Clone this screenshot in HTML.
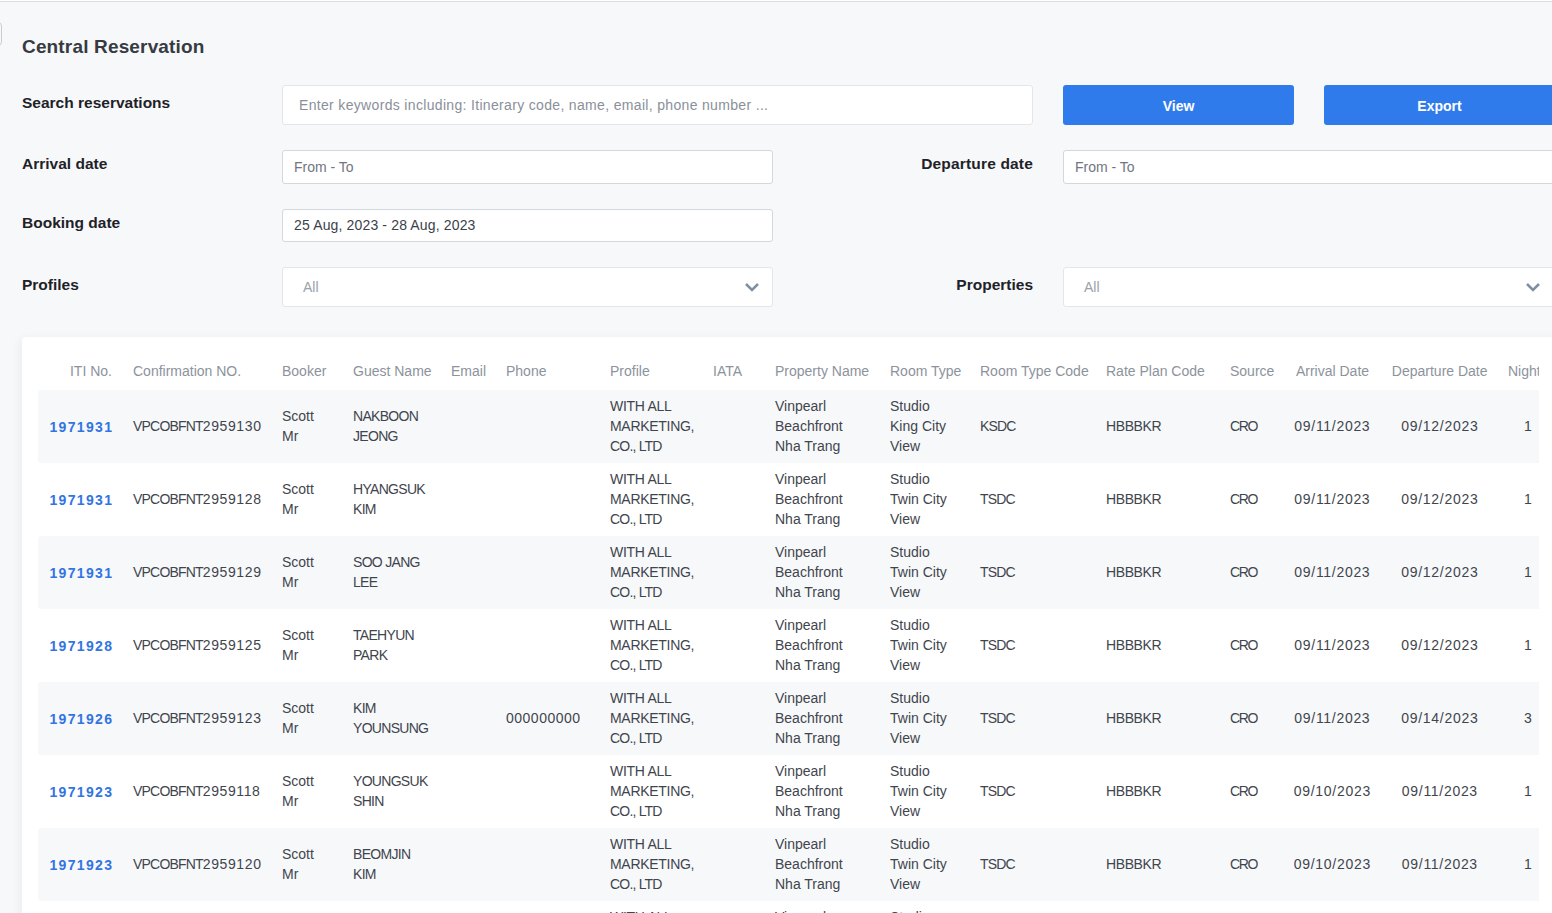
<!DOCTYPE html>
<html><head><meta charset="utf-8">
<style>
html,body{margin:0;padding:0;}
body{width:1552px;height:913px;overflow:hidden;position:relative;background:#f7f8fa;font-family:"Liberation Sans",sans-serif;}
.abs{position:absolute;white-space:nowrap;}
.topline{position:absolute;left:0;top:0;width:1552px;height:1px;background:#fff;border-bottom:1px solid #dcdee1;}
.leftbox{position:absolute;left:-20px;top:22px;width:20px;height:22px;border:1px solid #c9cdd2;border-radius:4px;}
.title{left:22px;top:35px;font-size:19px;letter-spacing:0.16px;font-weight:bold;color:#363b42;line-height:24px;}
.lbl{font-size:15.5px;font-weight:bold;color:#1e2228;line-height:20px;}
.inp{position:absolute;background:#fff;border:1px solid #d3d8de;border-radius:3px;box-sizing:border-box;}
.inp.light{border-color:#e3e6ea;}
.ph{position:absolute;font-size:14px;line-height:18px;white-space:nowrap;}
.btn{position:absolute;background:#2f7bec;border-radius:3px;color:#fff;font-weight:bold;font-size:14px;text-align:center;}
.card{position:absolute;left:22px;top:337px;width:1560px;height:600px;background:#fff;border-radius:4px;box-shadow:-1px 3px 12px rgba(20,30,40,0.065);}
.clip{position:absolute;left:38px;top:337px;width:1501px;height:600px;overflow:hidden;}
.hd{position:absolute;top:22px;font-size:14px;line-height:18px;color:#8c939c;white-space:nowrap;}
.row{position:absolute;left:0;width:1600px;height:73px;}
.row.odd{background:#f7f8fa;border-radius:3px;}
.c{position:absolute;font-size:14px;line-height:20px;color:#3f454d;white-space:nowrap;}
.lnk{color:#3274e2;font-weight:bold;letter-spacing:1.35px;}
</style></head><body>
<div class="topline"></div>
<div class="leftbox"></div>
<div class="abs title">Central Reservation</div>

<div class="abs lbl" style="left:22px;top:92.5px;">Search reservations</div>
<div class="inp light" style="left:282px;top:85px;width:751px;height:40px;"></div>
<div class="ph" style="left:299px;top:96px;color:#8a9099;letter-spacing:0.33px;">Enter keywords including: Itinerary code, name, email, phone number ...</div>
<div class="btn" style="left:1063px;top:85px;width:231px;height:40px;line-height:42px;">View</div>
<div class="btn" style="left:1324px;top:85px;width:231px;height:40px;line-height:42px;">Export</div>

<div class="abs lbl" style="left:22px;top:154px;">Arrival date</div>
<div class="inp" style="left:282px;top:150px;width:491px;height:34px;"></div>
<div class="ph" style="left:294px;top:158px;color:#6f7680;">From - To</div>
<div class="abs lbl" style="right:519px;top:154px;letter-spacing:0.17px;">Departure date</div>
<div class="inp" style="left:1063px;top:150px;width:520px;height:34px;"></div>
<div class="ph" style="left:1075px;top:158px;color:#6f7680;">From - To</div>

<div class="abs lbl" style="left:22px;top:213px;">Booking date</div>
<div class="inp" style="left:282px;top:209px;width:491px;height:33px;"></div>
<div class="ph" style="left:294px;top:216px;color:#3b414a;letter-spacing:0.15px;">25 Aug, 2023 - 28 Aug, 2023</div>

<div class="abs lbl" style="left:22px;top:275px;">Profiles</div>
<div class="inp light" style="left:282px;top:267px;width:491px;height:40px;"></div>
<div class="ph" style="left:303px;top:278px;color:#9aa1a9;">All</div>
<svg class="abs" style="left:744px;top:281px;" width="16" height="12" viewBox="0 0 16 12"><path d="M2 3 L8 9 L14 3" fill="none" stroke="#8190a0" stroke-width="2.5"/></svg>
<div class="abs lbl" style="right:519px;top:275px;">Properties</div>
<div class="inp light" style="left:1063px;top:267px;width:520px;height:40px;"></div>
<div class="ph" style="left:1084px;top:278px;color:#9aa1a9;">All</div>
<svg class="abs" style="left:1525px;top:281px;" width="16" height="12" viewBox="0 0 16 12"><path d="M2 3 L8 9 L14 3" fill="none" stroke="#8190a0" stroke-width="2.5"/></svg>

<div class="card"></div>
<div class="clip" id="tbl">
<div class="hd" style="right:1427px;top:25px;">ITI No.</div>
<div class="hd" style="left:95px;top:25px;">Confirmation NO.</div>
<div class="hd" style="left:244px;top:25px;">Booker</div>
<div class="hd" style="left:315px;top:25px;">Guest Name</div>
<div class="hd" style="left:413px;top:25px;">Email</div>
<div class="hd" style="left:468px;top:25px;">Phone</div>
<div class="hd" style="left:572px;top:25px;">Profile</div>
<div class="hd" style="left:675px;top:25px;">IATA</div>
<div class="hd" style="left:737px;top:25px;">Property Name</div>
<div class="hd" style="left:852px;top:25px;">Room Type</div>
<div class="hd" style="left:942px;top:25px;">Room Type Code</div>
<div class="hd" style="left:1068px;top:25px;">Rate Plan Code</div>
<div class="hd" style="left:1192px;top:25px;">Source</div>
<div class="hd" style="left:1194.5px;width:200px;text-align:center;top:25px;">Arrival Date</div>
<div class="hd" style="left:1301.7px;width:200px;text-align:center;top:25px;">Departure Date</div>
<div class="hd" style="left:1470px;top:25px;">Nights</div>
<div class="row odd" style="top:53px;"><div class="c lnk" style="right:1524.65px;top:27px;">1971931</div><div class="c" style="left:95px;top:26px;"><span style="letter-spacing:-0.8px">VPCOBFNT</span><span style="letter-spacing:0.6px">2959130</span></div><div class="c" style="left:244px;top:16px;">Scott<br>Mr</div><div class="c" style="left:315px;top:16px;letter-spacing:-0.7px;">NAKBOON<br>JEONG</div><div class="c" style="left:572px;top:6px;"><span style="letter-spacing:-0.3px">WITH ALL<br>MARKETING,</span><br><span style="letter-spacing:-0.8px">CO., LTD</span></div><div class="c" style="left:737px;top:6px;">Vinpearl<br>Beachfront<br>Nha Trang</div><div class="c" style="left:852px;top:6px;">Studio<br>King City<br>View</div><div class="c" style="left:942px;top:26px;letter-spacing:-0.85px;">KSDC</div><div class="c" style="left:1068px;top:26px;letter-spacing:-0.4px;">HBBBKR</div><div class="c" style="left:1192px;top:26px;letter-spacing:-1.3px;">CRO</div><div class="c" style="left:1194.35px;width:200px;text-align:center;top:26px;letter-spacing:0.7px;">09/11/2023</div><div class="c" style="left:1301.85px;width:200px;text-align:center;top:26px;letter-spacing:0.7px;">09/12/2023</div><div class="c" style="left:1390px;width:200px;text-align:center;top:26px;">1</div></div>
<div class="row" style="top:126px;"><div class="c lnk" style="right:1524.65px;top:27px;">1971931</div><div class="c" style="left:95px;top:26px;"><span style="letter-spacing:-0.8px">VPCOBFNT</span><span style="letter-spacing:0.6px">2959128</span></div><div class="c" style="left:244px;top:16px;">Scott<br>Mr</div><div class="c" style="left:315px;top:16px;letter-spacing:-0.7px;">HYANGSUK<br>KIM</div><div class="c" style="left:572px;top:6px;"><span style="letter-spacing:-0.3px">WITH ALL<br>MARKETING,</span><br><span style="letter-spacing:-0.8px">CO., LTD</span></div><div class="c" style="left:737px;top:6px;">Vinpearl<br>Beachfront<br>Nha Trang</div><div class="c" style="left:852px;top:6px;">Studio<br>Twin City<br>View</div><div class="c" style="left:942px;top:26px;letter-spacing:-0.85px;">TSDC</div><div class="c" style="left:1068px;top:26px;letter-spacing:-0.4px;">HBBBKR</div><div class="c" style="left:1192px;top:26px;letter-spacing:-1.3px;">CRO</div><div class="c" style="left:1194.35px;width:200px;text-align:center;top:26px;letter-spacing:0.7px;">09/11/2023</div><div class="c" style="left:1301.85px;width:200px;text-align:center;top:26px;letter-spacing:0.7px;">09/12/2023</div><div class="c" style="left:1390px;width:200px;text-align:center;top:26px;">1</div></div>
<div class="row odd" style="top:199px;"><div class="c lnk" style="right:1524.65px;top:27px;">1971931</div><div class="c" style="left:95px;top:26px;"><span style="letter-spacing:-0.8px">VPCOBFNT</span><span style="letter-spacing:0.6px">2959129</span></div><div class="c" style="left:244px;top:16px;">Scott<br>Mr</div><div class="c" style="left:315px;top:16px;letter-spacing:-0.7px;">SOO JANG<br>LEE</div><div class="c" style="left:572px;top:6px;"><span style="letter-spacing:-0.3px">WITH ALL<br>MARKETING,</span><br><span style="letter-spacing:-0.8px">CO., LTD</span></div><div class="c" style="left:737px;top:6px;">Vinpearl<br>Beachfront<br>Nha Trang</div><div class="c" style="left:852px;top:6px;">Studio<br>Twin City<br>View</div><div class="c" style="left:942px;top:26px;letter-spacing:-0.85px;">TSDC</div><div class="c" style="left:1068px;top:26px;letter-spacing:-0.4px;">HBBBKR</div><div class="c" style="left:1192px;top:26px;letter-spacing:-1.3px;">CRO</div><div class="c" style="left:1194.35px;width:200px;text-align:center;top:26px;letter-spacing:0.7px;">09/11/2023</div><div class="c" style="left:1301.85px;width:200px;text-align:center;top:26px;letter-spacing:0.7px;">09/12/2023</div><div class="c" style="left:1390px;width:200px;text-align:center;top:26px;">1</div></div>
<div class="row" style="top:272px;"><div class="c lnk" style="right:1524.65px;top:27px;">1971928</div><div class="c" style="left:95px;top:26px;"><span style="letter-spacing:-0.8px">VPCOBFNT</span><span style="letter-spacing:0.6px">2959125</span></div><div class="c" style="left:244px;top:16px;">Scott<br>Mr</div><div class="c" style="left:315px;top:16px;letter-spacing:-0.7px;">TAEHYUN<br>PARK</div><div class="c" style="left:572px;top:6px;"><span style="letter-spacing:-0.3px">WITH ALL<br>MARKETING,</span><br><span style="letter-spacing:-0.8px">CO., LTD</span></div><div class="c" style="left:737px;top:6px;">Vinpearl<br>Beachfront<br>Nha Trang</div><div class="c" style="left:852px;top:6px;">Studio<br>Twin City<br>View</div><div class="c" style="left:942px;top:26px;letter-spacing:-0.85px;">TSDC</div><div class="c" style="left:1068px;top:26px;letter-spacing:-0.4px;">HBBBKR</div><div class="c" style="left:1192px;top:26px;letter-spacing:-1.3px;">CRO</div><div class="c" style="left:1194.35px;width:200px;text-align:center;top:26px;letter-spacing:0.7px;">09/11/2023</div><div class="c" style="left:1301.85px;width:200px;text-align:center;top:26px;letter-spacing:0.7px;">09/12/2023</div><div class="c" style="left:1390px;width:200px;text-align:center;top:26px;">1</div></div>
<div class="row odd" style="top:345px;"><div class="c lnk" style="right:1524.65px;top:27px;">1971926</div><div class="c" style="left:95px;top:26px;"><span style="letter-spacing:-0.8px">VPCOBFNT</span><span style="letter-spacing:0.6px">2959123</span></div><div class="c" style="left:244px;top:16px;">Scott<br>Mr</div><div class="c" style="left:315px;top:16px;letter-spacing:-0.7px;">KIM<br>YOUNSUNG</div><div class="c" style="left:468px;top:26px;letter-spacing:0.5px;">000000000</div><div class="c" style="left:572px;top:6px;"><span style="letter-spacing:-0.3px">WITH ALL<br>MARKETING,</span><br><span style="letter-spacing:-0.8px">CO., LTD</span></div><div class="c" style="left:737px;top:6px;">Vinpearl<br>Beachfront<br>Nha Trang</div><div class="c" style="left:852px;top:6px;">Studio<br>Twin City<br>View</div><div class="c" style="left:942px;top:26px;letter-spacing:-0.85px;">TSDC</div><div class="c" style="left:1068px;top:26px;letter-spacing:-0.4px;">HBBBKR</div><div class="c" style="left:1192px;top:26px;letter-spacing:-1.3px;">CRO</div><div class="c" style="left:1194.35px;width:200px;text-align:center;top:26px;letter-spacing:0.7px;">09/11/2023</div><div class="c" style="left:1301.85px;width:200px;text-align:center;top:26px;letter-spacing:0.7px;">09/14/2023</div><div class="c" style="left:1390px;width:200px;text-align:center;top:26px;">3</div></div>
<div class="row" style="top:418px;"><div class="c lnk" style="right:1524.65px;top:27px;">1971923</div><div class="c" style="left:95px;top:26px;"><span style="letter-spacing:-0.8px">VPCOBFNT</span><span style="letter-spacing:0.6px">2959118</span></div><div class="c" style="left:244px;top:16px;">Scott<br>Mr</div><div class="c" style="left:315px;top:16px;letter-spacing:-0.7px;">YOUNGSUK<br>SHIN</div><div class="c" style="left:572px;top:6px;"><span style="letter-spacing:-0.3px">WITH ALL<br>MARKETING,</span><br><span style="letter-spacing:-0.8px">CO., LTD</span></div><div class="c" style="left:737px;top:6px;">Vinpearl<br>Beachfront<br>Nha Trang</div><div class="c" style="left:852px;top:6px;">Studio<br>Twin City<br>View</div><div class="c" style="left:942px;top:26px;letter-spacing:-0.85px;">TSDC</div><div class="c" style="left:1068px;top:26px;letter-spacing:-0.4px;">HBBBKR</div><div class="c" style="left:1192px;top:26px;letter-spacing:-1.3px;">CRO</div><div class="c" style="left:1194.35px;width:200px;text-align:center;top:26px;letter-spacing:0.7px;">09/10/2023</div><div class="c" style="left:1301.85px;width:200px;text-align:center;top:26px;letter-spacing:0.7px;">09/11/2023</div><div class="c" style="left:1390px;width:200px;text-align:center;top:26px;">1</div></div>
<div class="row odd" style="top:491px;"><div class="c lnk" style="right:1524.65px;top:27px;">1971923</div><div class="c" style="left:95px;top:26px;"><span style="letter-spacing:-0.8px">VPCOBFNT</span><span style="letter-spacing:0.6px">2959120</span></div><div class="c" style="left:244px;top:16px;">Scott<br>Mr</div><div class="c" style="left:315px;top:16px;letter-spacing:-0.7px;">BEOMJIN<br>KIM</div><div class="c" style="left:572px;top:6px;"><span style="letter-spacing:-0.3px">WITH ALL<br>MARKETING,</span><br><span style="letter-spacing:-0.8px">CO., LTD</span></div><div class="c" style="left:737px;top:6px;">Vinpearl<br>Beachfront<br>Nha Trang</div><div class="c" style="left:852px;top:6px;">Studio<br>Twin City<br>View</div><div class="c" style="left:942px;top:26px;letter-spacing:-0.85px;">TSDC</div><div class="c" style="left:1068px;top:26px;letter-spacing:-0.4px;">HBBBKR</div><div class="c" style="left:1192px;top:26px;letter-spacing:-1.3px;">CRO</div><div class="c" style="left:1194.35px;width:200px;text-align:center;top:26px;letter-spacing:0.7px;">09/10/2023</div><div class="c" style="left:1301.85px;width:200px;text-align:center;top:26px;letter-spacing:0.7px;">09/11/2023</div><div class="c" style="left:1390px;width:200px;text-align:center;top:26px;">1</div></div>
<div class="row" style="top:564px;"><div class="c lnk" style="right:1524.65px;top:27px;">1971921</div><div class="c" style="left:95px;top:26px;"><span style="letter-spacing:-0.8px">VPCOBFNT</span><span style="letter-spacing:0.6px">2959117</span></div><div class="c" style="left:244px;top:16px;">Scott<br>Mr</div><div class="c" style="left:315px;top:16px;letter-spacing:-0.7px;">BEOMJIN<br>KIM</div><div class="c" style="left:572px;top:6px;"><span style="letter-spacing:-0.3px">WITH ALL<br>MARKETING,</span><br><span style="letter-spacing:-0.8px">CO., LTD</span></div><div class="c" style="left:737px;top:6px;">Vinpearl<br>Beachfront<br>Nha Trang</div><div class="c" style="left:852px;top:6px;">Studio<br>Twin City<br>View</div><div class="c" style="left:942px;top:26px;letter-spacing:-0.85px;">TSDC</div><div class="c" style="left:1068px;top:26px;letter-spacing:-0.4px;">HBBBKR</div><div class="c" style="left:1192px;top:26px;letter-spacing:-1.3px;">CRO</div><div class="c" style="left:1194.35px;width:200px;text-align:center;top:26px;letter-spacing:0.7px;">09/10/2023</div><div class="c" style="left:1301.85px;width:200px;text-align:center;top:26px;letter-spacing:0.7px;">09/11/2023</div><div class="c" style="left:1390px;width:200px;text-align:center;top:26px;">1</div></div>
</div>
</body></html>
